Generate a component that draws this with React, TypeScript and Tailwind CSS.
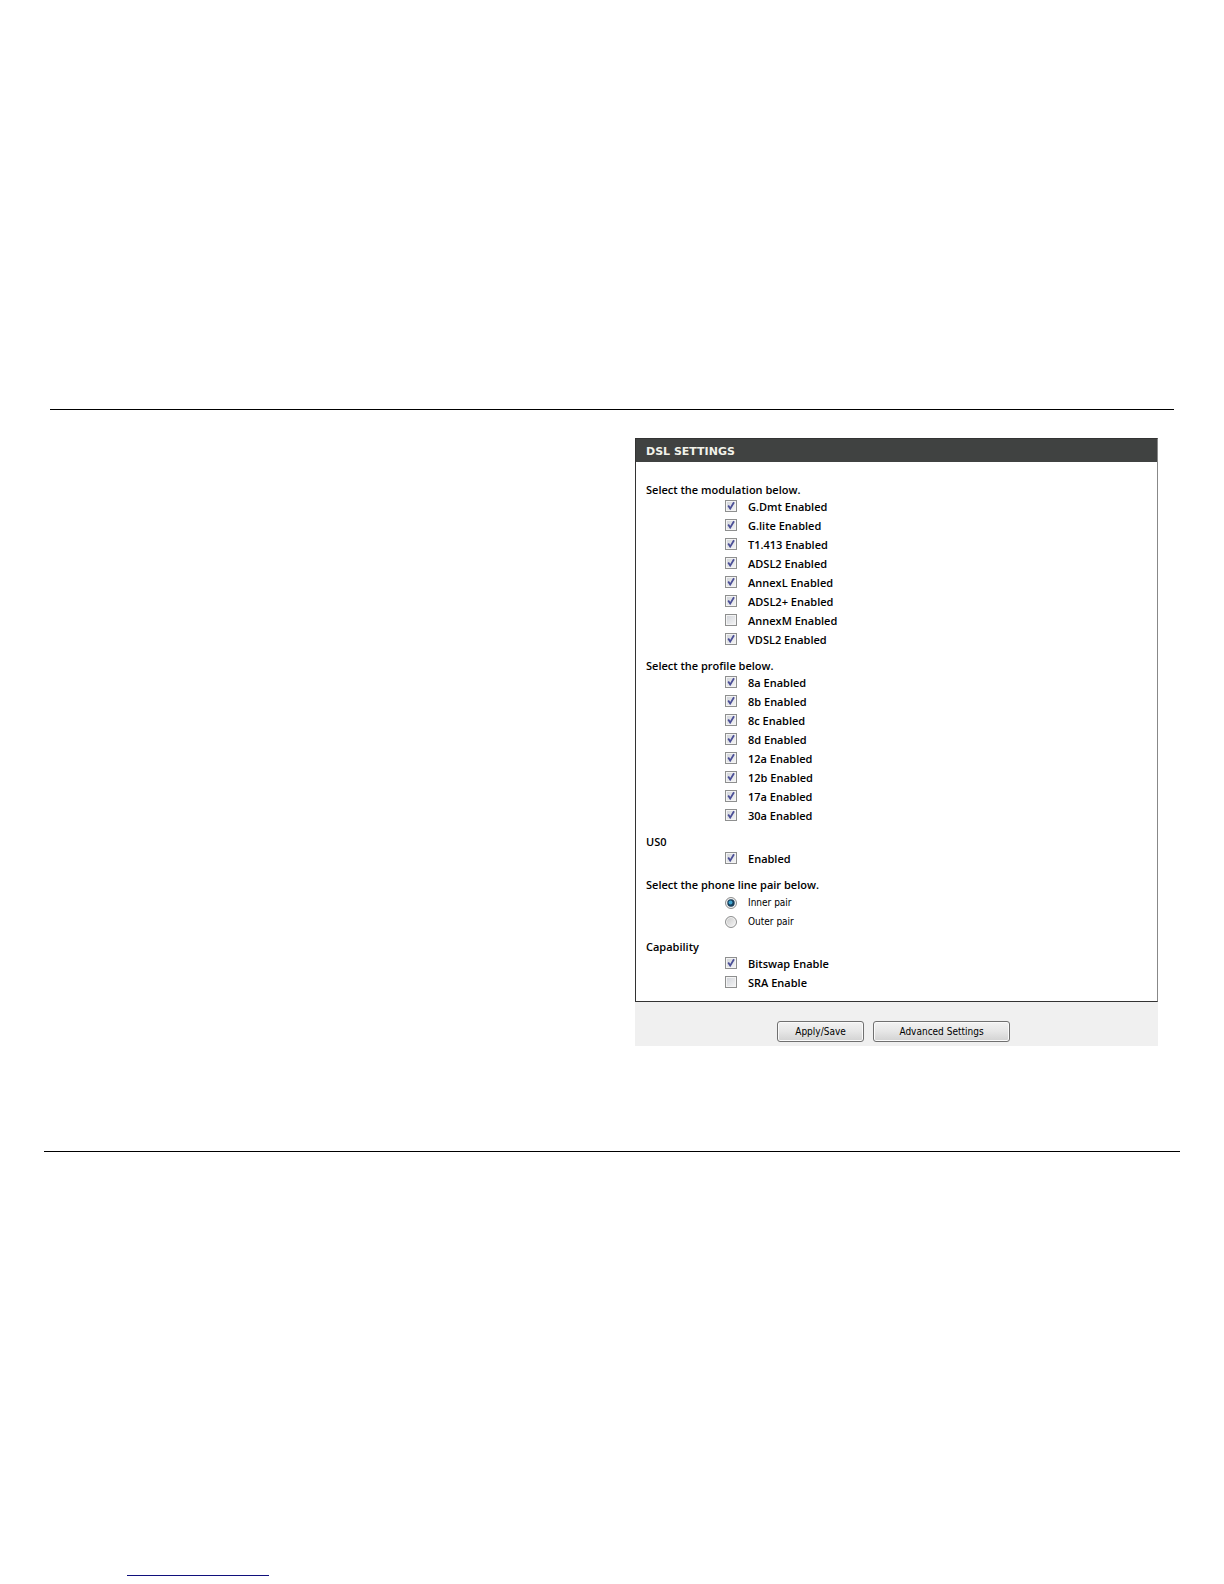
import { useState } from "react";

interface Option {
  id: string;
  label: string;
  checked: boolean;
}

interface Group {
  title: string;
  options: Option[];
}

const modulation: Group = {
  title: "Select the modulation below.",
  options: [
    { id: "gdmt", label: "G.Dmt Enabled", checked: true },
    { id: "glite", label: "G.lite Enabled", checked: true },
    { id: "t1413", label: "T1.413 Enabled", checked: true },
    { id: "adsl2", label: "ADSL2 Enabled", checked: true },
    { id: "annexl", label: "AnnexL Enabled", checked: true },
    { id: "adsl2plus", label: "ADSL2+ Enabled", checked: true },
    { id: "annexm", label: "AnnexM Enabled", checked: false },
    { id: "vdsl2", label: "VDSL2 Enabled", checked: true },
  ],
};

const profile: Group = {
  title: "Select the profile below.",
  options: [
    { id: "8a", label: "8a Enabled", checked: true },
    { id: "8b", label: "8b Enabled", checked: true },
    { id: "8c", label: "8c Enabled", checked: true },
    { id: "8d", label: "8d Enabled", checked: true },
    { id: "12a", label: "12a Enabled", checked: true },
    { id: "12b", label: "12b Enabled", checked: true },
    { id: "17a", label: "17a Enabled", checked: true },
    { id: "30a", label: "30a Enabled", checked: true },
  ],
};

const us0: Group = {
  title: "US0",
  options: [{ id: "us0", label: "Enabled", checked: true }],
};

const capability: Group = {
  title: "Capability",
  options: [
    { id: "bitswap", label: "Bitswap Enable", checked: true },
    { id: "sra", label: "SRA Enable", checked: false },
  ],
};

const legendClass = "block h-[15px] leading-[13px] font-semibold";
const rowClass = "flex h-[19px] items-center gap-[11px] pl-[79px]";

function CheckboxRow({ option }: { option: Option }) {
  const [checked, setChecked] = useState(option.checked);

  return (
    <div className={rowClass}>
      <span className="relative mb-[3px] flex size-3">
        <input
          id={option.id}
          type="checkbox"
          checked={checked}
          onChange={() => setChecked(!checked)}
          className="size-3 appearance-none border border-[#8e8f8f] bg-linear-to-br from-[#cfd2d8] to-[#f6f6f6] shadow-[inset_0_0_0_1px_#f4f4f4]"
        />
        {checked && (
          <svg
            viewBox="0 0 12 12"
            className="pointer-events-none absolute inset-0 size-3"
            fill="none"
            stroke="#4b4f97"
            strokeWidth="1.8"
          >
            <path d="M3.2 5.4 L5.2 8.6 L9 2.2" />
          </svg>
        )}
      </span>
      <label htmlFor={option.id} className="font-semibold">
        {option.label}
      </label>
    </div>
  );
}

function CheckboxGroup({ group }: { group: Group }) {
  return (
    <fieldset>
      <legend className={legendClass}>{group.title}</legend>
      {group.options.map((option) => (
        <CheckboxRow key={option.id} option={option} />
      ))}
    </fieldset>
  );
}

function PhoneLineGroup() {
  const [pair, setPair] = useState("inner");

  return (
    <fieldset>
      <legend className={legendClass}>Select the phone line pair below.</legend>
      {["inner", "outer"].map((value) => (
        <div key={value} className={rowClass}>
          <span className="relative flex size-3">
            <input
              id={value}
              type="radio"
              name="pair"
              checked={pair === value}
              onChange={() => setPair(value)}
              className="size-3 appearance-none rounded-full border border-[#8e8f8f] bg-linear-to-br from-[#c8c8c8] to-[#f8f8f8] shadow-[inset_0_0_0_1px_#f4f4f4]"
            />
            {pair === value && (
              <svg
                viewBox="0 0 12 12"
                className="pointer-events-none absolute inset-0 size-3"
              >
                <circle cx="6" cy="6" r="3.7" fill="#173f5c" />
                <circle cx="5.5" cy="5.4" r="2" fill="#3fa4d0" />
              </svg>
            )}
          </span>
          <label
            htmlFor={value}
            className="font-['DejaVu_Sans_Condensed','DejaVu_Sans',sans-serif] text-[10px]"
          >
            {value === "inner" ? "Inner pair" : "Outer pair"}
          </label>
        </div>
      ))}
    </fieldset>
  );
}

const buttonClass =
  "h-[21px] rounded-[3px] border border-[#707070] bg-linear-to-b from-[#f3f3f3] via-[#e6e6e6] to-[#d2d2d2] font-['DejaVu_Sans_Condensed','DejaVu_Sans',sans-serif] text-[10px] leading-[19px] shadow-[inset_0_0_0_1px_#fafafa]";

export default function App() {
  return (
    <div className="min-h-screen bg-white pt-[409px] font-['Open_Sans',sans-serif] text-[11px] text-black">
      <main className="mx-[50px] grid grid-cols-[585fr_539fr] border-t border-black pt-7">
        <form
          className="col-start-2 mr-4"
          onSubmit={(e) => e.preventDefault()}
        >
          <div className="border border-[#333] border-r-[#888]">
            <h1 className="h-[23px] bg-[#404241] pl-[10px] font-['DejaVu_Sans',sans-serif] text-[11px] leading-[25px] font-bold text-[#f2f2ea]">
              DSL SETTINGS
            </h1>
            <div className="flex flex-col gap-[9px] pt-[21px] pb-2 pl-[10px]">
              <CheckboxGroup group={modulation} />
              <CheckboxGroup group={profile} />
              <CheckboxGroup group={us0} />
              <PhoneLineGroup />
              <CheckboxGroup group={capability} />
            </div>
          </div>
          <div className="flex justify-center gap-[9px] bg-[#f0f0f0] pt-[19px] pr-[6px] pb-[4px]">
            <button type="submit" className={`${buttonClass} w-[87px]`}>
              Apply/Save
            </button>
            <button type="button" className={`${buttonClass} w-[137px]`}>
              Advanced Settings
            </button>
          </div>
        </form>
      </main>
      <footer className="mx-[44px] mt-[105px] border-t border-black pt-[423px] pl-[83px]">
        <hr className="h-px w-[142px] border-0 bg-[#10107c]" />
      </footer>
    </div>
  );
}
